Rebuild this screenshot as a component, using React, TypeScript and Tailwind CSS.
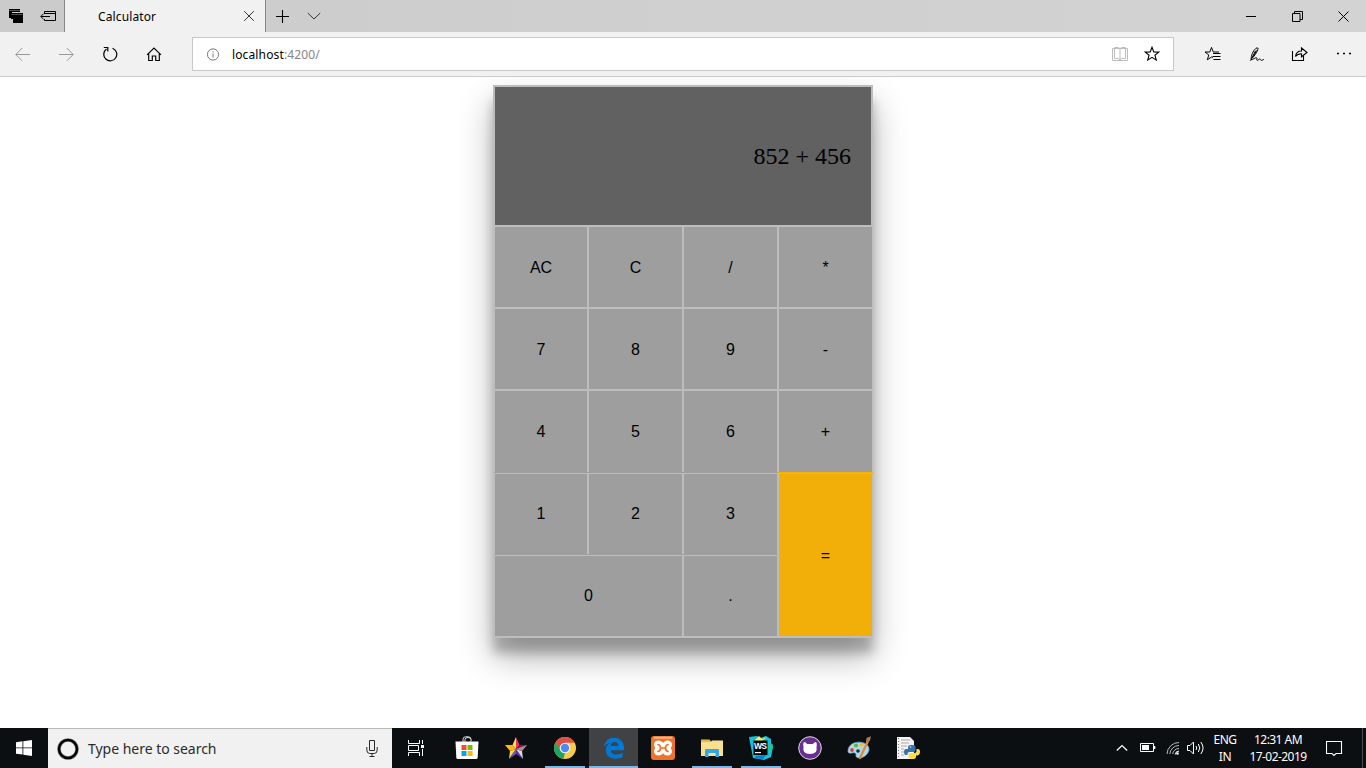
import React from 'react';

type IconProps = { w?: number; h?: number; box?: string; className?: string; children: React.ReactNode };

function Icon({ w = 16, h = 16, box, className = '', children }: IconProps) {
  return (
    <svg
      width={w}
      height={h}
      viewBox={box ?? `0 0 ${w} ${h}`}
      fill="none"
      stroke="currentColor"
      strokeWidth={1}
      className={`block shrink-0 ${className}`}
    >
      {children}
    </svg>
  );
}

function TabBar() {
  return (
    <div className="flex h-8 bg-[#d0d0d0] text-black">
      <div className="flex w-16 shrink-0 bg-[#cbcbcb] pl-2 pt-2">
        <Icon>
          <path d="M1 1h11v3H4v6H1z" fill="currentColor" stroke="none" />
          <path d="M3 5h12v10H5v-4H3z" fill="currentColor" stroke="none" />
          <path d="M1 2.500h11M3.500 6.500h11" stroke="#cbcbcb" strokeWidth={0.4} />
        </Icon>
        <Icon w={18} className="ml-4">
          <path d="M4.500 6V3.500h11v9h-11V11M4 5.500h11M.8 8.500H10M3.500 5.800.8 8.500l2.700 2.700" />
        </Icon>
      </div>
      <div className="flex w-[202px] shrink-0 items-center border-x border-[#868686] bg-[#f1f1f1] pl-[33px]">
        <span className="pt-px text-[12px] tracking-[0.12px]">Calculator</span>
        <Icon w={12} h={12} className="ml-auto mr-[10px] text-[#333]">
          <path d="m1.200 1.200 9.600 9.600m0-9.600-9.600 9.600" />
        </Icon>
      </div>
      <div className="flex flex-1 items-center bg-linear-to-r from-[#cdcdcd] to-[#d3d3d3]">
        <Icon w={14} h={14} className="ml-[10px]">
          <path d="M0 7.500h13M6.500 1v13" strokeWidth={1.100} />
        </Icon>
        <Icon w={14} h={8} className="ml-[17px] text-[#333]">
          <path d="m.8 1 6.200 6 6.200-6" />
        </Icon>
        <Icon w={10} h={10} className="ml-auto">
          <path d="M0 5.500h10" />
        </Icon>
        <Icon w={11} h={11} className="ml-9">
          <path d="M.5 2.500h7.500v8H.5zM2.500 2.500v-2h8v8H8" />
        </Icon>
        <Icon w={11} h={11} className="ml-[35px] mr-[17px]">
          <path d="m.5.5 10 10m0-10-10 10" />
        </Icon>
      </div>
    </div>
  );
}

const STAR = 'm8 1.200 1.800 4.700 5 .2-3.900 3.100 1.400 4.900L8 11.300l-4.300 2.800 1.400-4.900L1.200 6.100l5-.2z';

function AddressBar() {
  return (
    <div className="flex h-[45px] items-center border-b border-[#cacaca] bg-[#f1f1f1] pl-[15px] text-black">
      <Icon className="text-[#999]">
        <path d="M15 8.500H.8M7.200 2 .8 8.500l6.400 6.400" />
      </Icon>
      <Icon className="ml-7 text-[#999]">
        <path d="M0 8.500h14.200M7.800 2l6.400 6.500-6.400 6.400" />
      </Icon>
      <Icon className="ml-[27px]">
        <path d="M10.500 2.200A6.500 6.500 0 1 1 4.500 3M1.800 1.500h4v4" strokeWidth={1.200} />
      </Icon>
      <Icon className="ml-7">
        <path d="M1 8.800 8 2l7 6.800M2.700 7.500v7h3.600V10h3.400v4.500h3.600v-7" strokeWidth={1.150} />
      </Icon>
      <div className="ml-[30px] flex h-[34px] w-[982px] items-center border border-[#c8c8c8] bg-white pl-[13px]">
        <Icon w={14} h={14} className="text-[#777]">
          <circle cx="7" cy="7.500" r="5.600" />
          <path d="M7 6.500v4M7 4.200v1.200" />
        </Icon>
        <span className="ml-3 pt-px text-[12px] tracking-[0.13px]">
          localhost<span className="text-[#858585]">:4200/</span>
        </span>
        <Icon className="ml-auto text-[#bcbcbc]">
          <path d="M.5 2.500h15v12H.5zM2.500 1.500h4L8 2.800l1.500-1.300h4v11h-4L8 14l-1.500-1.500h-4zM8 2.800V14" />
        </Icon>
        <Icon className="ml-4 mr-[13px]">
          <path d={STAR} strokeWidth={1.100} />
        </Icon>
      </div>
      <Icon w={17} className="ml-[30px]">
        <path d="M8.800 11.800 7.500 11l-4.200 2.800 1.500-4.800L1 6h4.800l1.700-4.600L9.300 6H15" />
        <path d="M9 7.500h7.500M8.500 10.500h8M9.500 13.500h7" />
      </Icon>
      <Icon className="ml-7">
        <path d="M2 13.500c.3-4 1.500-8.500 5-11.200 1.500-1 2.600-.2 1.800 1.500-1.500 3.500-3.500 6.500-5.500 8.200M1.500 14.800c2.200-4 3.200-6.500 5-10M7.500 4.500 4 11M2 13.500c3 0 4-2 5.500-1.800 1.200.2-.5 2.600.7 2.700 1.100 0 1.500-1.600 2.600-1.400.7.100.7 1.500 1.600 1.400.8 0 1.100-.7 2.400-.9" />
      </Icon>
      <Icon w={17} className="ml-[26px]">
        <path d="M1.500 5v9.500h11V10M4.500 10.500c.5-3.800 2.500-5.500 6-5.500V2l5.500 4.500-5.500 4.300V7.700c-2.700 0-4.500.6-6 2.800z" strokeWidth={1.100} />
      </Icon>
      <Icon className="ml-[28px]">
        <path d="M1 7.500h2m4 0h2m4 0h2" strokeWidth={1.600} />
      </Icon>
    </div>
  );
}

const KEYS: [string, string][] = [
  ['AC', 'col-start-1 row-start-3 pt-0.5'],
  ['C', 'col-start-2 row-start-3 pt-0.5'],
  ['/', 'col-start-3 row-start-3 pt-0.5'],
  ['*', 'col-start-4 row-start-3 pt-0.5'],
  ['7', 'col-start-1 row-start-5 pt-0.5'],
  ['8', 'col-start-2 row-start-5 pt-0.5'],
  ['9', 'col-start-3 row-start-5 pt-0.5'],
  ['-', 'col-start-4 row-start-5 pt-0.5'],
  ['4', 'col-start-1 row-start-7'],
  ['5', 'col-start-2 row-start-7'],
  ['6', 'col-start-3 row-start-7'],
  ['+', 'col-start-4 row-start-7'],
  ['1', 'col-start-1 row-start-10'],
  ['2', 'col-start-2 row-start-10'],
  ['3', 'col-start-3 row-start-10'],
  ['0', 'col-start-1 col-span-2 row-start-13'],
  ['.', 'col-start-3 row-start-13'],
];

function Calculator() {
  return (
    <div className="mx-auto grid h-[553px] w-[380px] grid-cols-[92px_93px_93px_93px] grid-rows-[138px_2px_80px_2px_80px_2px_81px_1px_1px_80px_1px_1px_80px] gap-x-0.5 bg-[#bdbdbd] pl-0.5 pt-0.5 font-['Liberation_Sans',Arial,sans-serif] text-base text-black shadow-[0_19px_32px_rgba(0,0,0,0.3),0_15px_10px_rgba(0,0,0,0.22)]">
      <div className="col-span-4 row-start-1 mr-px flex items-center justify-end bg-[#616161] pr-5 font-['Liberation_Serif','Times_New_Roman',serif] text-2xl">
        852 + 456
      </div>
      {KEYS.map(([label, place]) => (
        <button key={label} className={`flex items-center justify-center bg-[#9e9e9e] ${place}`}>
          {label}
        </button>
      ))}
      <div className="col-span-3 col-start-1 row-start-8 -ml-px -mr-px bg-[#9e9e9e]" />
      <div className="col-start-4 row-start-8 -ml-px -mr-px bg-[#f2af0a]" />
      <div className="col-span-3 col-start-1 row-start-11 -ml-px -mr-px bg-[#9e9e9e]" />
      <div className="col-start-4 row-start-9 bg-[#dbb75e]" />
      <button className="col-start-4 row-span-4 row-start-10 flex items-center justify-center bg-[#f2af0a] pt-0.5">=</button>
    </div>
  );
}

type AppSlotProps = { running?: boolean; active?: boolean; children: React.ReactNode };

function AppSlot({ running, active, children }: AppSlotProps) {
  return (
    <div className={`flex h-10 w-[49px] shrink-0 justify-center ${active ? 'bg-[#404244]' : ''}`}>
      <div className={`flex h-10 items-center justify-center ${active ? 'w-[49px] shrink-0' : 'w-10'} ${running ? 'border-b-2 border-[#76b9ed] pt-0.5' : ''}`}>
        {children}
      </div>
    </div>
  );
}

function AppIcon({ children }: { children: React.ReactNode }) {
  return (
    <svg width={24} height={24} viewBox="0 0 24 24" className="block shrink-0">
      {children}
    </svg>
  );
}

function Taskbar() {
  return (
    <div className="flex h-10 bg-[#0c0f11] text-white">
      <div className="flex w-12 shrink-0 items-center pl-4">
        <svg width={16} height={16} viewBox="0 0 16 16" fill="#fff">
          <path d="M0 2.300 6.500 1.300v6.200H0zM7.300 1.200 16 0v7.500H7.300zM0 8.300h6.500v6.300L0 13.700zM7.300 8.300H16V16l-8.700-1.200z" />
        </svg>
      </div>
      <div className="flex w-[344px] shrink-0 items-center border-t border-[#b9b9b9] bg-[#f1f1f1] pl-[9px] text-[#2b2b2b]">
        <svg width={22} height={22} viewBox="0 0 22 22" fill="none">
          <circle cx="11" cy="11" r="9" stroke="#8b8b8b" strokeWidth="3.600" />
          <circle cx="11" cy="11" r="9" stroke="#000" strokeWidth="2.500" />
        </svg>
        <span className="ml-[9px] text-[14px] tracking-[-0.02px]">Type here to search</span>
        <Icon w={12} h={17} className="ml-auto mr-[14px]">
          <path d="M3.500.5h5v10h-5zM.8 7v3q0 3.500 3 3.500h4.400q3 0 3-3.500V7M6 13.500v3M3.500 16.500h5" />
        </Icon>
      </div>
      <div className="flex w-[50px] shrink-0 items-center pl-[15px]">
        <Icon w={18} h={18} className="text-white">
          <path d="M1.500 1v3.500h11V1M1.500 17v-3.500h11V17M1.500 6.500h10v5h-10zM15.500 1v4M15.500 10v7" />
          <path d="M14 6h3v3h-3z" fill="currentColor" stroke="none" />
        </Icon>
      </div>
      <AppSlot>
        <AppIcon>
          <path d="M8 6V3.500Q8 .8 10.500.8h3Q16 .8 16 3.500V6M10 6V3.500q0-2 3-2t3 2" fill="none" stroke="#ddd" />
          <path d="M.5 5.500h23l-.8 16q-.2 1.500-1.500 1.500H2.800q-1.300 0-1.500-1.500z" fill="#fff" />
          <path d="M6.500 9h5v5h-5z" fill="#f25022" />
          <path d="M12.500 9h5v5h-5z" fill="#7fba00" />
          <path d="M6.500 15h5v5h-5z" fill="#00a4ef" />
          <path d="M12.500 15h5v5h-5z" fill="#ffb900" />
        </AppIcon>
      </AppSlot>
      <AppSlot>
        <AppIcon>
          <path d="M12 1 8.500 9l3.500 4z" fill="#ffe04d" />
          <path d="m12 1 3.500 8-3.500 4z" fill="#e93562" />
          <path d="M1 9h7.500l3.500 4-6 2z" fill="#ffb514" />
          <path d="m6 15 6-2-7 10z" fill="#ffd84e" />
          <path d="m5 23 7-10v5z" fill="#7655cf" />
          <path d="m12 13 7 10-7-5z" fill="#5733a9" />
          <path d="m12 13 6 2 1 8z" fill="#dadada" />
          <path d="M15.500 9H23l-5 6-6-2z" fill="#a90b3e" />
          <path d="m23 9-5 6-6-2z" fill="#999" />
        </AppIcon>
      </AppSlot>
      <AppSlot running>
        <AppIcon>
          <circle cx="12" cy="12" r="11" fill="#f9cc45" />
          <path d="M2.500 6.500A11 11 0 0 1 21.600 6.700H12L7.200 14.400z" fill="#dd5144" />
          <path d="M2.500 6.500 7.300 14.500 12 17l-1.700 5.900A11 11 0 0 1 2.500 6.500z" fill="#1da462" />
          <circle cx="12" cy="12" r="5.300" fill="#f4f4f4" />
          <circle cx="12" cy="12" r="4.200" fill="#4c8bf5" />
        </AppIcon>
      </AppSlot>
      <AppSlot running active>
        <AppIcon>
          <path
            d="M1.800 10.900C2.800 5 6.800 1.800 12.200 1.800c6.300 0 9.800 4.500 9.800 10v2.400H8.600c.2 3 2.900 4.200 6 4.200 2.300 0 4.300-.6 6-1.600v4.300c-1.900 1.100-4.300 1.700-7.100 1.700-6.100 0-9.700-3.600-9.700-8.500 0-3.600 2-6.300 5.200-7.800-3.100.6-5.400 2-7.200 4.400zm6.900-1h7.600c0-2.500-1.400-4-3.700-4s-3.600 1.600-3.900 4z"
            fill="#0078d7"
          />
        </AppIcon>
      </AppSlot>
      <AppSlot>
        <AppIcon>
          <rect width="24" height="24" rx="3" fill="#ee7326" />
          <rect x="2.500" y=".7" width="19" height="2" rx="1" fill="#f7b78e" />
          <path
            d="M7.500 4.500c2 0 3.300 1 4.500 2.300 1.200-1.300 2.500-2.300 4.500-2.300 2.800 0 4.500 1.700 4.500 4.200 0 1.400-.7 2.500-1.500 3.300.8.800 1.500 1.900 1.500 3.300 0 2.500-1.700 4.200-4.500 4.200-2 0-3.300-1-4.500-2.300-1.200 1.300-2.500 2.300-4.500 2.300-2.800 0-4.500-1.700-4.500-4.200 0-1.400.7-2.500 1.500-3.300-.8-.8-1.500-1.900-1.500-3.300 0-2.500 1.700-4.200 4.500-4.200z"
            fill="#fff"
          />
          <path
            d="M7 8.500q2.500.5 2.500 3.500T7 15.500M17 8.500q-2.500.5-2.500 3.500t2.500 3.500M9.500 12h5"
            fill="none"
            stroke="#ee7326"
            strokeWidth="1.700"
            strokeLinecap="round"
          />
        </AppIcon>
      </AppSlot>
      <AppSlot running>
        <AppIcon>
          <path d="M1 3.500h8.500l1.500 2h12V20H1z" fill="#e8b84a" />
          <path d="M1 6h10l1-1.500h11V20H1z" fill="#fbe18d" />
          <path d="M5 21v-7q0-1 1-1h12q1 0 1 1v7h-3.500v-4h-7v4z" fill="#35a5e5" />
        </AppIcon>
      </AppSlot>
      <AppSlot running>
        <AppIcon>
          <path d="m0 1 8-1 3 2 6-2 5 3v5l2 3-2 10-7 3-11-2z" fill="#17bfe0" />
          <path d="m10 0 3 3 5-2-5 4H5z" fill="#f7f45c" />
          <path d="m22 7 2 2-2 9-5-8z" fill="#16c9a6" />
          <path d="m7 20 10-1-3 4-8-1z" fill="#087cc8" />
          <rect x="4.500" y="4.500" width="14" height="14.500" fill="#050505" />
          <text x="5" y="12.500" fill="#fff" fontFamily="Liberation Sans, sans-serif" fontSize="8.500" fontWeight="700" textLength="13">WS</text>
          <path d="M6 16h6v1.200H6z" fill="#fff" />
        </AppIcon>
      </AppSlot>
      <AppSlot>
        <AppIcon>
          <circle cx="12" cy="12" r="11.300" fill="#6b2d91" stroke="#ddd" />
          <path d="M5.500 11.500Q4.800 7 6 6q1.500.2 3.200 2h5.600q1.700-1.800 3.200-2 1.200 1 .5 5.500 1.500 6.500-6.500 6.500t-6.500-6.500z" fill="#fff" />
        </AppIcon>
      </AppSlot>
      <AppSlot>
        <AppIcon>
          <path d="M1 15C1 8.500 8 5 15 6.500c7 1.500 9 7 5 11.500-3 4-8 4.500-10 3.500-2.500-1.500.5-3.500-2-4.500S1 19 1 15z" fill="#add9ee" stroke="#6ba9cd" strokeWidth=".7" />
          <circle cx="5" cy="14" r="1.900" fill="#e34234" />
          <circle cx="9" cy="9.500" r="2.100" fill="#5fb638" />
          <circle cx="14.500" cy="8.700" r="2" fill="#efc02c" />
          <circle cx="11" cy="15" r="1.800" fill="#182c39" />
          <path d="M20.500 6 13 22" stroke="#e28b36" strokeWidth="2.300" strokeLinecap="round" />
          <path d="m19 6 .5-4L24 .3l-1 4-2 2.500z" fill="#af7e55" />
        </AppIcon>
      </AppSlot>
      <AppSlot>
        <AppIcon>
          <path d="M1 1h13l4 4v18H1z" fill="#f4f4f4" />
          <path d="M5 4h9M5 7h8M5 10h6M5 13h3M5 16h3M5 19h3" stroke="#aaa" />
          <path d="M2.500 2v20" stroke="#777" strokeDasharray="1 2" />
          <path d="M12 13V11q0-2 2.500-2h2.500q2.500 0 2.500 2v3q0 2-2 2h-4q-2 0-2 2v1H10q-2 0-2-3t2-3z" fill="#3674a8" />
          <path d="M20.500 13H22q2 0 2 3t-2 3.500h-2V21q0 2-2.500 2H15q-2.500 0-2.500-2v-2.500q0-1.500 1.500-1.500h4.500q2 0 2-2z" fill="#ffdc4a" />
          <circle cx="14.500" cy="11" r=".7" fill="#fff" />
        </AppIcon>
      </AppSlot>
      <div className="ml-auto flex items-center">
        <Icon w={12} h={8}>
          <path d="m.8 6.500 5.200-5 5.200 5" strokeWidth={1.200} />
        </Icon>
        <Icon w={16} h={10} className="ml-3">
          <path d="M.5.5h13v8H.5z" />
          <path d="M2 2h7v5H2zM14 3h1.300v3H14z" fill="currentColor" stroke="none" />
        </Icon>
        <Icon w={14} h={14} className="ml-[10px]">
          <path d="M1 13A12 12 0 0 1 13 1.500M3.800 13A9.200 9.200 0 0 1 13 4.500M6.600 13A6.400 6.400 0 0 1 13 7.500" stroke="#bbb" />
          <path d="M9.200 13.500A4 4 0 0 1 13 10" />
          <circle cx="11.500" cy="12.500" r="1.300" fill="currentColor" stroke="none" />
        </Icon>
        <Icon w={17} h={14} className="ml-[7px]">
          <path d="M.5 4.500H3L6.500 1v12L3 9.500H.5zM9 5q1.500 2 0 4M11.300 3q3 4 0 8M13.800 1q4.500 6 0 12" />
        </Icon>
        <div className="ml-[9px] w-6 whitespace-nowrap text-center text-[12px] leading-[17px] tracking-[-0.45px]">
          ENG
          <br />
          IN
        </div>
        <div className="ml-[11px] w-[60px] whitespace-nowrap text-center text-[12px] leading-[17px] tracking-[-0.55px]">
          12:31 AM
          <br />
          17-02-2019
        </div>
        <Icon w={17} h={17} className="ml-[18px]">
          <path d="M.5 1.500h15v12H10L8 15.500l-2-2H.5z" strokeWidth={1.100} />
        </Icon>
        <div className="ml-[19px] mr-[3px] h-10 w-px bg-[#4b4d4e]" />
      </div>
    </div>
  );
}

export default function App() {
  return (
    <div className="flex h-screen w-screen flex-col overflow-hidden bg-white font-['Noto_Sans','Open_Sans',sans-serif]">
      <header className="relative">
        <TabBar />
        <AddressBar />
      </header>
      <main className="min-h-0 flex-1 overflow-hidden pt-2">
        <Calculator />
      </main>
      <Taskbar />
    </div>
  );
}
